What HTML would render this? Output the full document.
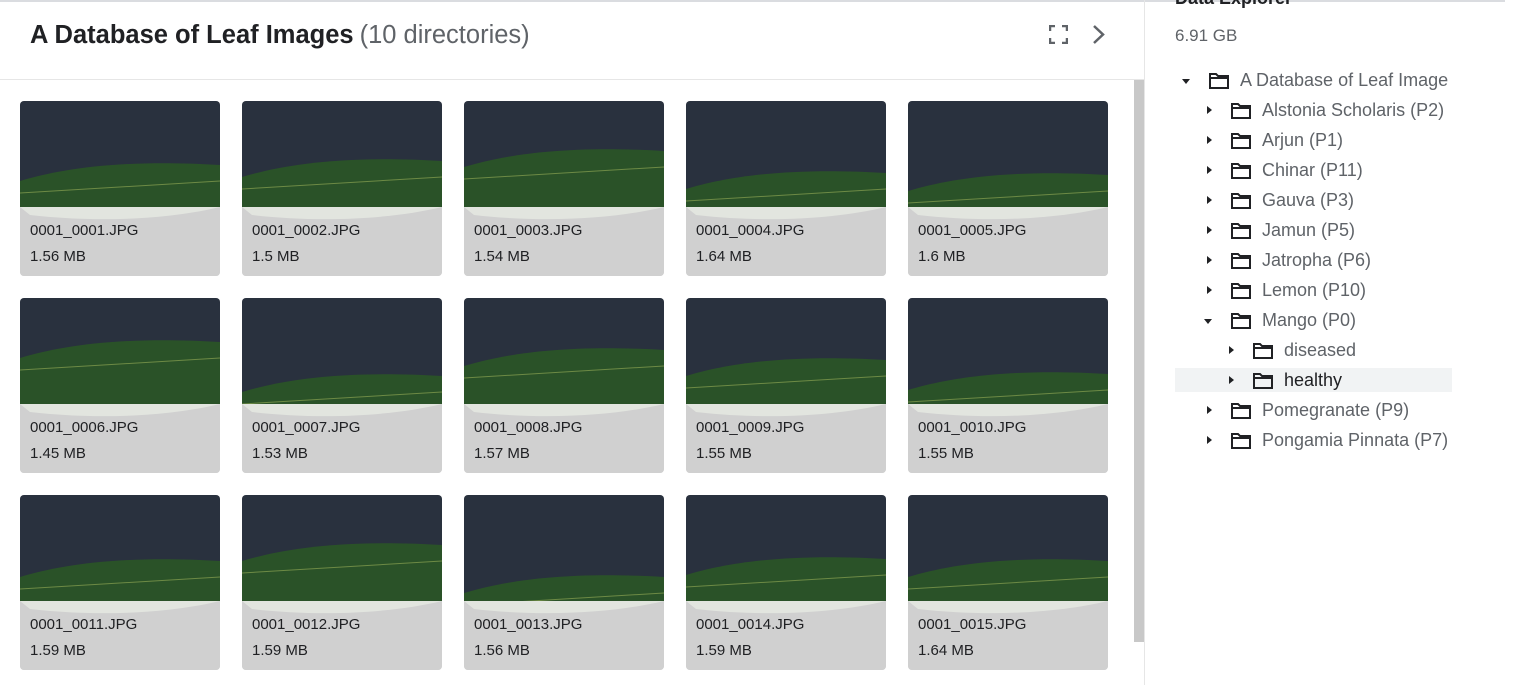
<!DOCTYPE html>
<html><head><meta charset="utf-8"><style>
*{margin:0;padding:0;box-sizing:border-box}
body{width:1513px;height:685px;overflow:hidden;background:#fff;font-family:"Liberation Sans",sans-serif;position:relative;color:#202124}
.topline{position:absolute;left:0;top:0;width:1505px;height:2px;background:#dadce0}
.title{position:absolute;left:30px;top:21px;font-size:25.5px;font-weight:bold;color:#202124;white-space:nowrap}
.title span{font-weight:normal;color:#5f6368;margin-left:6px}
.hline{position:absolute;left:0;top:79px;width:1144px;height:1px;background:#e6e6e6}
.vline{position:absolute;left:1144px;top:0;width:1px;height:685px;background:#e6e6e6}
.scroll{position:absolute;left:1134px;top:80px;width:10px;height:562px;background:#c8c8c8}
.card{position:absolute;width:200px;height:175px;border-radius:4px;overflow:hidden;background:#d0d0d0}
.card svg{position:absolute;left:0;top:0}
.card .n{position:absolute;left:10px;top:121px;font-size:15px;color:#202124}
.card .s{position:absolute;left:10px;top:147px;font-size:15px;color:#202124}
.de{position:absolute;left:1175px;top:-12px;font-size:18px;font-weight:bold}
.gb{position:absolute;left:1175px;top:26px;font-size:17px;color:#5f6368}
.row{position:absolute;height:24px;font-size:18px;color:#5f6368;white-space:nowrap}
.row .t{position:absolute;top:6px;width:0;height:0;border-top:4px solid transparent;border-bottom:4px solid transparent;border-left:5px solid #202124}
.row .td{position:absolute;top:9px;width:0;height:0;border-left:4px solid transparent;border-right:4px solid transparent;border-top:5px solid #202124}
.row svg{position:absolute;top:3px}
.row .l{position:absolute;top:-1px}
.hl{position:absolute;left:1175px;top:368px;width:277px;height:24px;background:#f1f3f4}
</style></head><body>
<div class="topline"></div>
<div class="title">A Database of Leaf Images<span>(10 directories)</span></div>
<svg style="position:absolute;left:1049px;top:25px" width="19" height="19" viewBox="0 0 19 19" fill="none" stroke="#5f6368" stroke-width="2.5"><path d="M1 6V1h5M13 1h5v5M18 13v5h-5M6 18H1v-5"/></svg>
<svg style="position:absolute;left:1092px;top:24px" width="14" height="21" viewBox="0 0 14 21" fill="none" stroke="#5f6368" stroke-width="2.5"><path d="M2 2l9 8.5L2 19"/></svg>
<div class="hline"></div>
<div class="vline"></div>
<div class="scroll"></div>
<div id="cards"></div>
<div class="de">Data Explorer</div>
<div class="gb">6.91 GB</div>
<div class="hl"></div>
<div id="tree"></div>
<script>
var xs=[20,242,464,686,908],ys=[101,298,495];
var sz=["1.56","1.5","1.54","1.64","1.6","1.45","1.53","1.57","1.55","1.55","1.59","1.59","1.56","1.59","1.64"];
var lt=[62,58,48,70,72,42,76,50,60,74,64,48,80,62,64];
var h="";
for(var r=0;r<3;r++)for(var c=0;c<5;c++){var i=r*5+c,k=i+1,t=lt[i];
var nm="0001_"+("000"+k).slice(-4)+".JPG";
h+='<div class="card" style="left:'+xs[c]+'px;top:'+ys[r]+'px"><svg width="200" height="175"><rect width="200" height="106" fill="#29313e"/><path d="M0 '+(t+18)+' C40 '+(t+6)+' 100 '+(t-4)+' 200 '+(t+2)+' L200 106 L0 106Z" fill="#2a5228"/><path d="M0 '+(t+30)+' L200 '+(t+18)+'" stroke="#6d8a45" stroke-width="1"/><rect y="106" width="200" height="69" fill="#d0d0d0"/><path d="M0 106 L200 106 C150 118 80 122 10 114Z" fill="#e2e5df"/></svg><div class="n">'+nm+'</div><div class="s">'+sz[i]+' MB</div></div>';}
document.getElementById("cards").innerHTML=h;
var tr=[[0,"A Database of Leaf Image",1],[1,"Alstonia Scholaris (P2)"],[1,"Arjun (P1)"],[1,"Chinar (P11)"],[1,"Gauva (P3)"],[1,"Jamun (P5)"],[1,"Jatropha (P6)"],[1,"Lemon (P10)"],[1,"Mango (P0)",1],[2,"diseased"],[2,"healthy"],[1,"Pomegranate (P9)"],[1,"Pongamia Pinnata (P7)"]];
var g="";
tr.forEach(function(e,i){var o=e[0]*22,y=70+i*30;
g+='<div class="row" style="left:'+(1182+o)+'px;top:'+y+'px;width:300px">'+(e[2]?'<div class="td" style="left:0"></div>':'<div class="t" style="left:3px"></div>')+'<svg style="left:27px" width="20" height="16" viewBox="0 0 20 16" fill="none" stroke="#202124" stroke-width="2"><path d="M1 1h6l2 2h10v12H1z"/><path d="M1 5h18"/></svg><div class="l" style="left:58px;top:0px'+(e[1]=="healthy"?';color:#202124':'')+'">'+e[1]+'</div></div>';});
document.getElementById("tree").innerHTML=g;
</script>
</body></html>
